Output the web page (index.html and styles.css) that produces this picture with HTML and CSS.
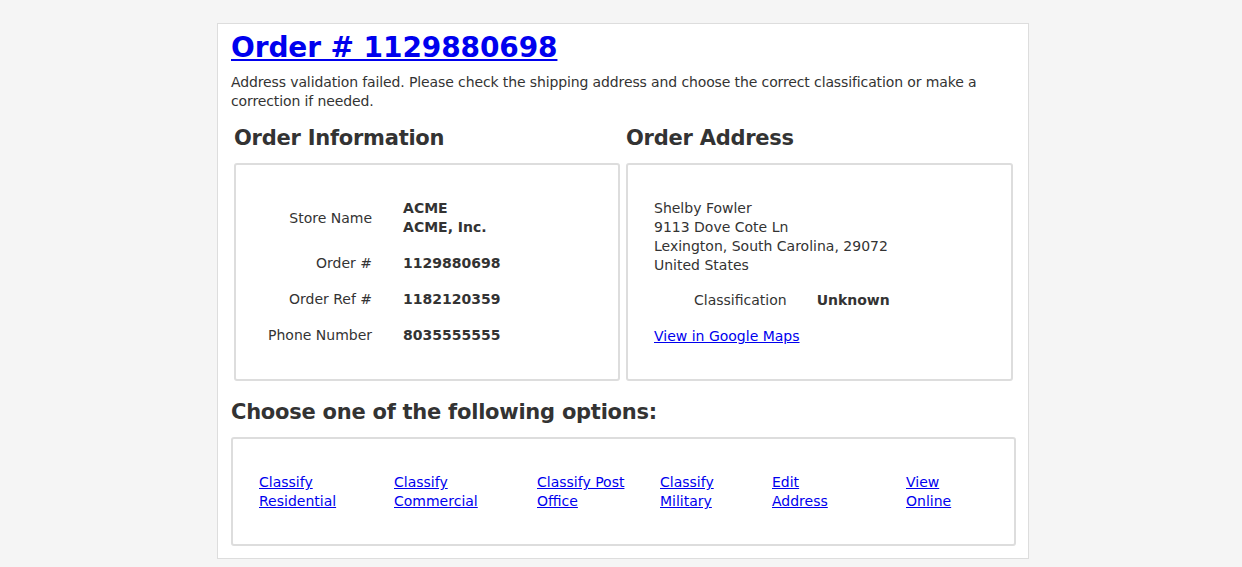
FILE: index.html
```html
<!DOCTYPE html>
<html lang="en">
<head>
<meta charset="utf-8">
<title>Order # 1129880698</title>
<link rel="stylesheet" href="styles.css">
</head>
<body>
<div class="page">
  <h1 class="order-title"><a href="#">Order # 1129880698</a></h1>
  <p class="intro">Address validation failed. Please check the shipping address and choose the correct classification or make a correction if needed.</p>

  <div class="columns">
    <section class="col">
      <h2 class="section-title">Order Information</h2>
      <div class="card card-info">
        <div class="kv">
          <div class="kv-label">Store Name</div>
          <div class="kv-value">ACME<br>ACME, Inc.</div>
          <div class="kv-label">Order #</div>
          <div class="kv-value">1129880698</div>
          <div class="kv-label">Order Ref #</div>
          <div class="kv-value">1182120359</div>
          <div class="kv-label">Phone Number</div>
          <div class="kv-value">8035555555</div>
        </div>
      </div>
    </section>
    <section class="col">
      <h2 class="section-title">Order Address</h2>
      <div class="card card-address">
        <div class="address">Shelby Fowler<br>9113 Dove Cote Ln<br>Lexington, South Carolina, 29072<br>United States</div>
        <div class="kv kv-class">
          <div class="kv-label">Classification</div>
          <div class="kv-value">Unknown</div>
        </div>
        <a class="maps" href="#">View in Google Maps</a>
      </div>
    </section>
  </div>

  <h2 class="section-title options-title">Choose one of the following options:</h2>
  <div class="card card-options">
    <div class="options">
      <div class="opt"><a href="#">Classify<br>Residential</a></div>
      <div class="opt"><a href="#">Classify<br>Commercial</a></div>
      <div class="opt"><a href="#">Classify Post<br>Office</a></div>
      <div class="opt"><a href="#">Classify<br>Military</a></div>
      <div class="opt"><a href="#">Edit<br>Address</a></div>
      <div class="opt"><a href="#">View<br>Online</a></div>
    </div>
  </div>
</div>
</body>
</html>
```
FILE: styles.css
```css
* { box-sizing: border-box; }

html, body {
  margin: 0;
  background: #f5f5f5;
}

body {
  padding: 23px 0 0 4px;
  font-family: "DejaVu Sans", Verdana, sans-serif;
  font-size: 14px;
  line-height: 19px;
  color: #333;
}

a { color: #0000ee; }

.page {
  width: 812px;
  margin: 0 auto;
  background: #fff;
  border: 1px solid #ddd;
  padding: 0 12px 12px 13px;
}

.order-title {
  margin: 7px 0 8px;
  font-size: 28px;
  line-height: 34px;
  font-weight: bold;
  letter-spacing: -0.1px;
}

.intro {
  margin: 0;
  letter-spacing: -0.12px;
}

.columns {
  display: grid;
  grid-template-columns: 392px 1fr;
}

.col {
  padding: 0 3px;
  display: flex;
  flex-direction: column;
}

.section-title {
  font-size: 21px;
  line-height: 25px;
  font-weight: bold;
  letter-spacing: -0.25px;
  margin: 15px 0 12px;
}

.card {
  border: 2px solid #ddd;
  border-radius: 3px;
  background: #fff;
}

.col .card { flex: 1; }

.card-info {
  padding: 34px 32px 33px;
}

.card-address {
  padding: 34px 26px 33px;
}

.kv {
  display: grid;
  grid-template-columns: auto auto;
  justify-content: start;
  column-gap: 31px;
  row-gap: 17px;
  align-items: center;
}

.kv-label { text-align: right; }
.kv-value { font-weight: bold; }

.kv-class {
  margin: 16px 0 17px 40px;
  column-gap: 30px;
}

.maps { display: inline-block; }

.options-title {
  margin: 19px 0 12px;
}

.card-options {
  padding: 34px 26px 33px;
}

.options {
  display: grid;
  grid-template-columns: 135px 143px 123px 112px 134px 1fr;
}
```
